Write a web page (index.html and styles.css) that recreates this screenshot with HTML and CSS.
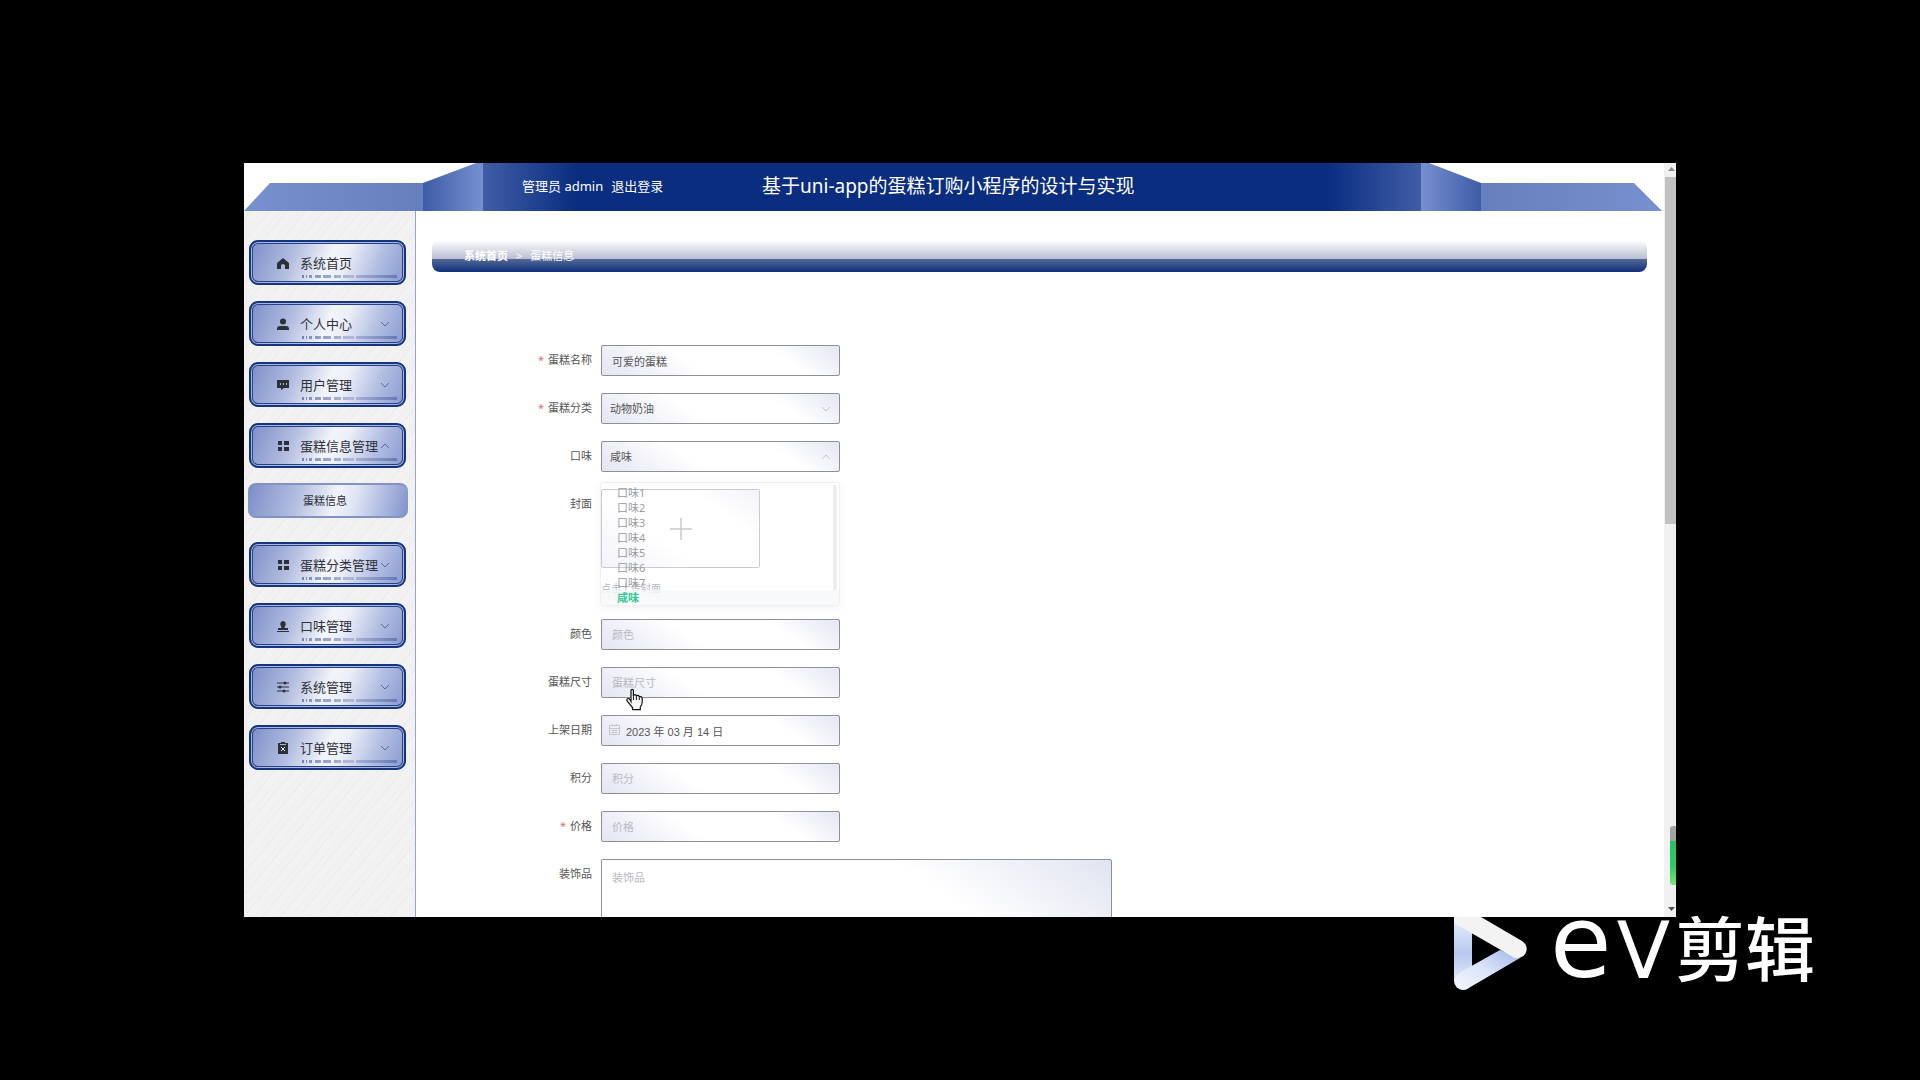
FILE: index.html
```html
<!DOCTYPE html>
<html lang="zh-CN">
<head>
<meta charset="utf-8">
<title>基于uni-app的蛋糕订购小程序的设计与实现</title>
<link rel="stylesheet" href="styles.css">
</head>
<body>
<svg class="defs" width="0" height="0" aria-hidden="true">
  <defs>
    <linearGradient id="bar-fade"><stop offset="0" stop-color="#7182b7"/><stop offset=".15" stop-color="#8e9bc8"/><stop offset=".5" stop-color="#b1b9d9"/><stop offset=".6" stop-color="#a2abd0"/><stop offset="1" stop-color="#6679b5"/></linearGradient>
    <symbol id="bars" viewBox="0 0 95 3"><path fill="url(#bar-fade)" d="M0 0h2v3H0zM4 0h1v3H4zM7 0h3v3H7zM13 0h6v3h-6zM21 0h8v3h-8zM32 0h7v3h-7zM41 0h11v3H41zM54 0h41v3H54z"/></symbol>
    <symbol id="down" viewBox="0 0 10 6"><path d="M1 1l4 4 4-4" fill="none" stroke="currentColor"/></symbol>
    <symbol id="up" viewBox="0 0 10 6"><path d="M1 5l4-4 4 4" fill="none" stroke="currentColor"/></symbol>
    <symbol id="grid" viewBox="0 0 12 12"><path d="M1 1h4v4H1zM7 1h5v4H7zM1 7h4v4H1zM7 7h5v4H7z"/></symbol>
  </defs>
</svg>

<div class="screen">
  <div class="app">
    <header class="top">
      <svg class="top-art" viewBox="0 0 1420 48" preserveAspectRatio="none" aria-hidden="true">
        <defs>
          <linearGradient id="wing-l"><stop offset="0" stop-color="#7791d0"/><stop offset="1" stop-color="#6680bd"/></linearGradient>
          <linearGradient id="wing-r"><stop offset="0" stop-color="#6680bd"/><stop offset="1" stop-color="#7791d0"/></linearGradient>
          <linearGradient id="fold-l"><stop offset="0" stop-color="#3d5ba7"/><stop offset="1" stop-color="#7790cf"/></linearGradient>
          <linearGradient id="fold-r"><stop offset="0" stop-color="#7790cf"/><stop offset="1" stop-color="#3d5ba7"/></linearGradient>
          <linearGradient id="core"><stop offset="0" stop-color="#405da6"/><stop offset=".1" stop-color="#0a2d80"/><stop offset=".9" stop-color="#0a2d80"/><stop offset="1" stop-color="#405da6"/></linearGradient>
        </defs>
        <path fill="url(#wing-l)" d="M0 48L26 20H179V48z"/>
        <path fill="url(#fold-l)" d="M179 20L232 0H239V48H179z"/>
        <path fill="url(#core)" d="M239 0H1177V48H239z"/>
        <path fill="url(#fold-r)" d="M1177 0H1185L1237 20V48H1177z"/>
        <path fill="url(#wing-r)" d="M1237 20H1390L1418 48H1237z"/>
      </svg>
      <div class="user"><span>管理员 admin</span><a href="#">退出登录</a></div>
      <h1>基于uni-app的蛋糕订购小程序的设计与实现</h1>
    </header>

    <div class="body">
      <nav class="side">
        <button class="item" type="button"><svg class="ico" viewBox="0 0 12 12"><path d="M6 1L12 6V12H8V8.500Q8 7 6 7T4 8.500V12H0V6z"/></svg><span>系统首页</span><svg class="bars"><use href="#bars"/></svg></button>
        <button class="item" type="button"><svg class="ico" viewBox="0 0 12 12"><circle cx="6" cy="3.500" r="3"/><path d="M0 12V11Q0 8 3 8H9Q12 8 12 11V12z"/></svg><span>个人中心</span><svg class="chev"><use href="#down"/></svg><svg class="bars"><use href="#bars"/></svg></button>
        <button class="item" type="button"><svg class="ico" viewBox="0 0 12 12"><path fill-rule="evenodd" d="M0 1H12V9H7L4 11V9H0zM3 4V6H4V4zM6 4V6H7V4zM9 4V6H10V4z"/></svg><span>用户管理</span><svg class="chev"><use href="#down"/></svg><svg class="bars"><use href="#bars"/></svg></button>
        <button class="item" type="button"><svg class="ico"><use href="#grid"/></svg><span>蛋糕信息管理</span><svg class="chev"><use href="#up"/></svg><svg class="bars"><use href="#bars"/></svg></button>
        <a class="sub" href="#">蛋糕信息</a>
        <button class="item" type="button"><svg class="ico"><use href="#grid"/></svg><span>蛋糕分类管理</span><svg class="chev"><use href="#down"/></svg><svg class="bars"><use href="#bars"/></svg></button>
        <button class="item" type="button"><svg class="ico" viewBox="0 0 12 12"><path d="M6 1A3 3 0 0 1 8 6L7.500 8H11V10H1V8H4.500L4 6A3 3 0 0 1 6 1zM0 11H12V12H0z"/></svg><span>口味管理</span><svg class="chev"><use href="#down"/></svg><svg class="bars"><use href="#bars"/></svg></button>
        <button class="item" type="button"><svg class="ico" viewBox="0 0 12 12"><path d="M0 1.500H12V2.500H0zM0 5.500H12V6.500H0zM0 9.500H12V10.500H0z"/><circle cx="8" cy="2" r="1.500"/><circle cx="3" cy="6" r="1.500"/><circle cx="7" cy="10" r="1.500"/></svg><span>系统管理</span><svg class="chev"><use href="#down"/></svg><svg class="bars"><use href="#bars"/></svg></button>
        <button class="item" type="button"><svg class="ico" viewBox="0 0 12 12"><path d="M1 1H4V0H8V1H11V12H1z"/><path d="M4 5L8 9M8 5L4 9" stroke="#dfe3f1"/><path d="M3 2.500H9" stroke="#a9b3d6"/></svg><span>订单管理</span><svg class="chev"><use href="#down"/></svg><svg class="bars"><use href="#bars"/></svg></button>
      </nav>

      <main class="main">
        <div class="crumbs"><a href="#">系统首页</a><span>&gt;</span><span>蛋糕信息</span></div>
        <form class="form">
          <div class="row"><label for="name" class="req">蛋糕名称</label><div class="field"><input id="name" value="可爱的蛋糕"></div></div>
          <div class="row"><label for="type" class="req">蛋糕分类</label><div class="field"><select id="type"><option>动物奶油</option></select><svg class="caret"><use href="#down"/></svg></div></div>
          <div class="row"><label for="taste">口味</label><div class="field"><select id="taste"><option>咸味</option></select><svg class="caret"><use href="#up"/></svg>
            <ul class="drop"><li>口味1</li><li>口味2</li><li>口味3</li><li>口味4</li><li>口味5</li><li>口味6</li><li>口味7</li><li class="on">咸味</li></ul>
          </div></div>
          <div class="row"><label for="cover">封面</label><div class="cover"><button id="cover" class="upload" type="button" aria-label="上传封面"><svg viewBox="0 0 22 22"><path d="M11 0V22M0 11H22" stroke="#8d8f95" stroke-width="1.500"/></svg></button><p>点击上传封面</p></div></div>
          <div class="row"><label for="color">颜色</label><div class="field"><input id="color" placeholder="颜色"></div></div>
          <div class="row"><label for="size">蛋糕尺寸</label><div class="field"><input id="size" placeholder="蛋糕尺寸">
            <svg class="hand" viewBox="0 0 17 22"><path d="M5 13V2Q5 .8 6.200 .8T7.400 2V8Q7.400 6.200 8.900 6.200T10.300 8Q10.300 6.900 11.800 6.900T13.200 8.800Q13.500 7.900 14.800 8.200T16.200 10V14Q16 16 14.300 18.500V21.200H6.500V19L1.500 13Q.2 11 1.500 10.200T4 11.200z" fill="#f6f6f6" stroke="#111" stroke-width="1.200"/><path d="M7.500 8V11.500M10.400 8V11.500M13.300 9V11.500" stroke="#111" fill="none"/></svg>
          </div></div>
          <div class="row"><label for="date">上架日期</label><div class="field date"><input id="date" value="2023 年 03 月 14 日"><svg class="cal" viewBox="0 0 11 11"><path d="M.5 1.500H10.500V10.500H.5zM.5 4.500H10.500M3 0V2M8 0V2M2.500 6.500H8.500M2.500 8.500H8.500" fill="none" stroke="#c3c5cb"/></svg></div></div>
          <div class="row"><label for="points">积分</label><div class="field"><input id="points" placeholder="积分"></div></div>
          <div class="row"><label for="price" class="req">价格</label><div class="field"><input id="price" placeholder="价格"></div></div>
          <div class="row"><label for="decor">装饰品</label><textarea id="decor" placeholder="装饰品"></textarea></div>
        </form>
      </main>
    </div>
  </div>
  <div class="scroll" aria-hidden="true">
    <svg viewBox="0 0 12 14"><path fill="#8b8b8b" d="M4 8L7.500 4L11 8z"/></svg>
    <div class="thumb"></div>
    <svg class="end" viewBox="0 0 12 14"><path fill="#505050" d="M4 4L7.500 8L11 4z"/></svg>
    <div class="pill"></div>
  </div>
</div>

<footer class="brand">
  <svg viewBox="0 0 73 73" aria-hidden="true">
    <defs>
      <linearGradient id="m1" x1="0" y1="0" x2="0" y2="1"><stop offset="0" stop-color="#e9effc"/><stop offset=".5" stop-color="#b7c8ef"/><stop offset="1" stop-color="#edf3fe"/></linearGradient>
      <linearGradient id="m2" x1="1" y1="0" x2="0" y2="1"><stop offset="0" stop-color="#9fb6e8"/><stop offset=".5" stop-color="#dae4fa"/><stop offset="1" stop-color="#f2f6ff"/></linearGradient>
    </defs>
    <path fill="url(#m1)" d="M0 0H18V64A9 9 0 0 1 0 64z"/>
    <path fill="url(#m2)" d="M46 33L5 56A9 9 0 0 0 13 72L66 41z"/>
    <path fill="#f3f3f4" d="M0 0H27L68 24A9 9 0 0 1 59 40L0 6z"/>
  </svg>
  <span class="e">e</span><span class="v">V</span><span class="cn">剪辑</span>
</footer>
</body>
</html>
```
FILE: styles.css
```css
* { box-sizing: border-box; }
body {
  margin: 0;
  height: 100vh;
  display: grid;
  grid-template-rows: 1fr 163px;
  padding-top: 163px;
  background: #000;
  overflow: hidden;
  color: #555;
  font: 11px/16px "Noto Sans", "Noto Sans CJK SC", sans-serif;
}
.defs { position: absolute; }
a { color: inherit; text-decoration: none; }
button, input, select, textarea { font: inherit; color: inherit; margin: 0; }

.screen { display: flex; margin: 0 244px; background: #fff; min-height: 0; overflow: hidden; }
.app { flex: 1; min-width: 0; display: flex; flex-direction: column; }

.top {
  position: relative;
  flex: none;
  height: 48px;
  display: flex;
  align-items: center;
  padding: 0 0 2px 278px;
  color: #fff;
}
.top-art { position: absolute; inset: 0; width: 100%; height: 100%; }
.user { position: relative; display: flex; gap: 8px; width: 240px; font-size: 13px; }
.top h1 { position: relative; margin: 0; font-size: 19px; line-height: 28px; font-weight: 400; white-space: nowrap; }

.body { flex: 1; min-height: 0; display: flex; }
.side {
  flex: none;
  width: 172px;
  padding: 29px 8px 0 4px;
  border-right: 1px solid #94a3cf;
  background: repeating-linear-gradient(130deg, #f2f1f1 0 5px, #eceaeb 5px 6px, #f3f2f2 6px 13px, #efeded 13px 14px);
}
.item {
  position: relative;
  display: grid;
  grid-template-columns: 12px 1fr 10px;
  column-gap: 11px;
  align-items: center;
  width: 157px;
  height: 45px;
  margin: 0 0 16px 1px;
  padding: 0 14px 0 26px;
  border: 2px solid #16357f;
  border-radius: 9px;
  background: linear-gradient(112deg, #7c8ec8 0%, #b3bde0 28%, #f3f5fb 50%, #eceff8 60%, #b3bee2 80%, #8799d0 100%);
  box-shadow: inset 0 0 0 1px #a9b6de, inset 0 0 0 2px #24428c;
  color: #2f323b;
  font-size: 13px;
  text-align: left;
}
.item span { white-space: nowrap; margin-right: -11px; }
.ico { width: 12px; height: 12px; fill: #2c3038; }
.chev { width: 10px; height: 6px; color: #5d6c96; }
.bars { position: absolute; left: 51px; bottom: 5px; width: 95px; height: 3px; }
.sub {
  display: flex;
  align-items: center;
  justify-content: center;
  width: 160px;
  height: 35px;
  margin: -1px 0 24px;
  padding-right: 6px;
  border: solid #8492c0;
  border-width: 2px 0;
  border-radius: 8px;
  background: linear-gradient(105deg, #7c8ec8 0%, #b5bfe1 32%, #f0f3fa 54%, #dfe5f4 66%, #7f91cc 100%);
  color: #2f323b;
}

.main { flex: 1; min-width: 0; padding: 29px 17px 0 16px; overflow: hidden; }
.crumbs {
  display: flex;
  gap: 8px;
  height: 32px;
  padding: 8px 32px;
  border-radius: 8px;
  background: linear-gradient(#fff 0, #b8bdd1 19px, #566995 19px, #0f2f7e 32px);
  color: #fff;
}
.crumbs a { font-weight: 700; }

.form { display: flex; flex-direction: column; gap: 17px; padding-top: 73px; }
.row { display: flex; gap: 9px; }
.row label { width: 160px; padding-top: 7px; text-align: right; }
.req::before { content: "*"; color: #e5677a; margin-right: 4px; }
.field { position: relative; width: 239px; height: 31px; }
input, select, textarea, .upload {
  border: 1px solid #8f9096;
  border-radius: 2px;
  background: linear-gradient(35deg, #e4e5f3 0%, #fff 38%, #fff 74%, #e4e6f2 100%);
}
input, select { display: block; width: 100%; height: 100%; padding: 0 10px; appearance: none; outline: 0; }
select { padding: 0 8px; }
::placeholder { color: #b9bbc2; opacity: 1; }
.date input { padding-left: 24px; font-family: "Liberation Sans", "Noto Sans CJK SC", sans-serif; }
.cal { position: absolute; left: 8px; top: 9px; width: 11px; height: 11px; }
.caret { position: absolute; right: 9px; top: 13px; width: 10px; height: 6px; color: #c2c4cb; }
.hand { position: absolute; left: 25px; top: 21px; width: 17px; height: 23px; z-index: 3; }
.drop {
  position: absolute;
  z-index: 2;
  left: -1px;
  top: 41px;
  width: 240px;
  height: 124px;
  margin: 0;
  padding: 2px 0 0;
  list-style: none;
  overflow: hidden;
  border: 1px solid #eeeff2;
  border-radius: 3px;
  background: linear-gradient(#ededf0, #ededf0) right 2px top 2px / 4px 105px no-repeat, #fff8;
  box-shadow: 0 2px 10px #0000000d;
  color: #999ba1;
  line-height: 15px;
}
.drop li { padding-left: 16px; }
.drop .on { background: #f5f7facc; color: #35c796; font-weight: 700; }
.cover { height: 113px; }
.upload { display: grid; place-items: center; width: 159px; height: 79px; padding: 0; }
.upload svg { width: 22px; height: 22px; }
.cover p { margin: 12px 0 0; font-size: 10px; line-height: 16px; color: #66686e; }
textarea {
  display: block;
  width: 511px;
  height: 150px;
  padding: 10px;
  resize: none;
  outline: 0;
  background: linear-gradient(35deg, #fff 70%, #e1e4f1 100%);
}

.scroll { position: relative; flex: none; width: 12px; display: flex; flex-direction: column; background: #f1f1f1; }
.scroll svg { width: 12px; height: 14px; flex: none; }
.thumb { height: 46%; margin-left: 1px; background: #c1c1c1; }
.scroll .end { margin-top: auto; }
.pill {
  position: absolute;
  right: 0;
  bottom: 32px;
  width: 6px;
  height: 59px;
  border-radius: 3px 0 0 3px;
  background: linear-gradient(#a3a3a3 0 15px, #27c268 15px, #2fca68 40px, #7be672);
}

.brand { display: flex; justify-content: flex-end; align-items: flex-start; padding-right: 105px; color: #fff; white-space: nowrap; }
.brand svg { width: 73px; height: 73px; margin-right: 23px; }
.e { font-family: "DejaVu Sans", sans-serif; font-size: 100px; line-height: 52px; margin-right: 5px; }
.v { font-family: "DejaVu Sans", sans-serif; font-size: 78px; line-height: 68px; margin-right: 5px; }
.cn { font-family: "Noto Sans CJK SC", sans-serif; font-size: 70px; line-height: 58px; font-weight: 500; }
```
